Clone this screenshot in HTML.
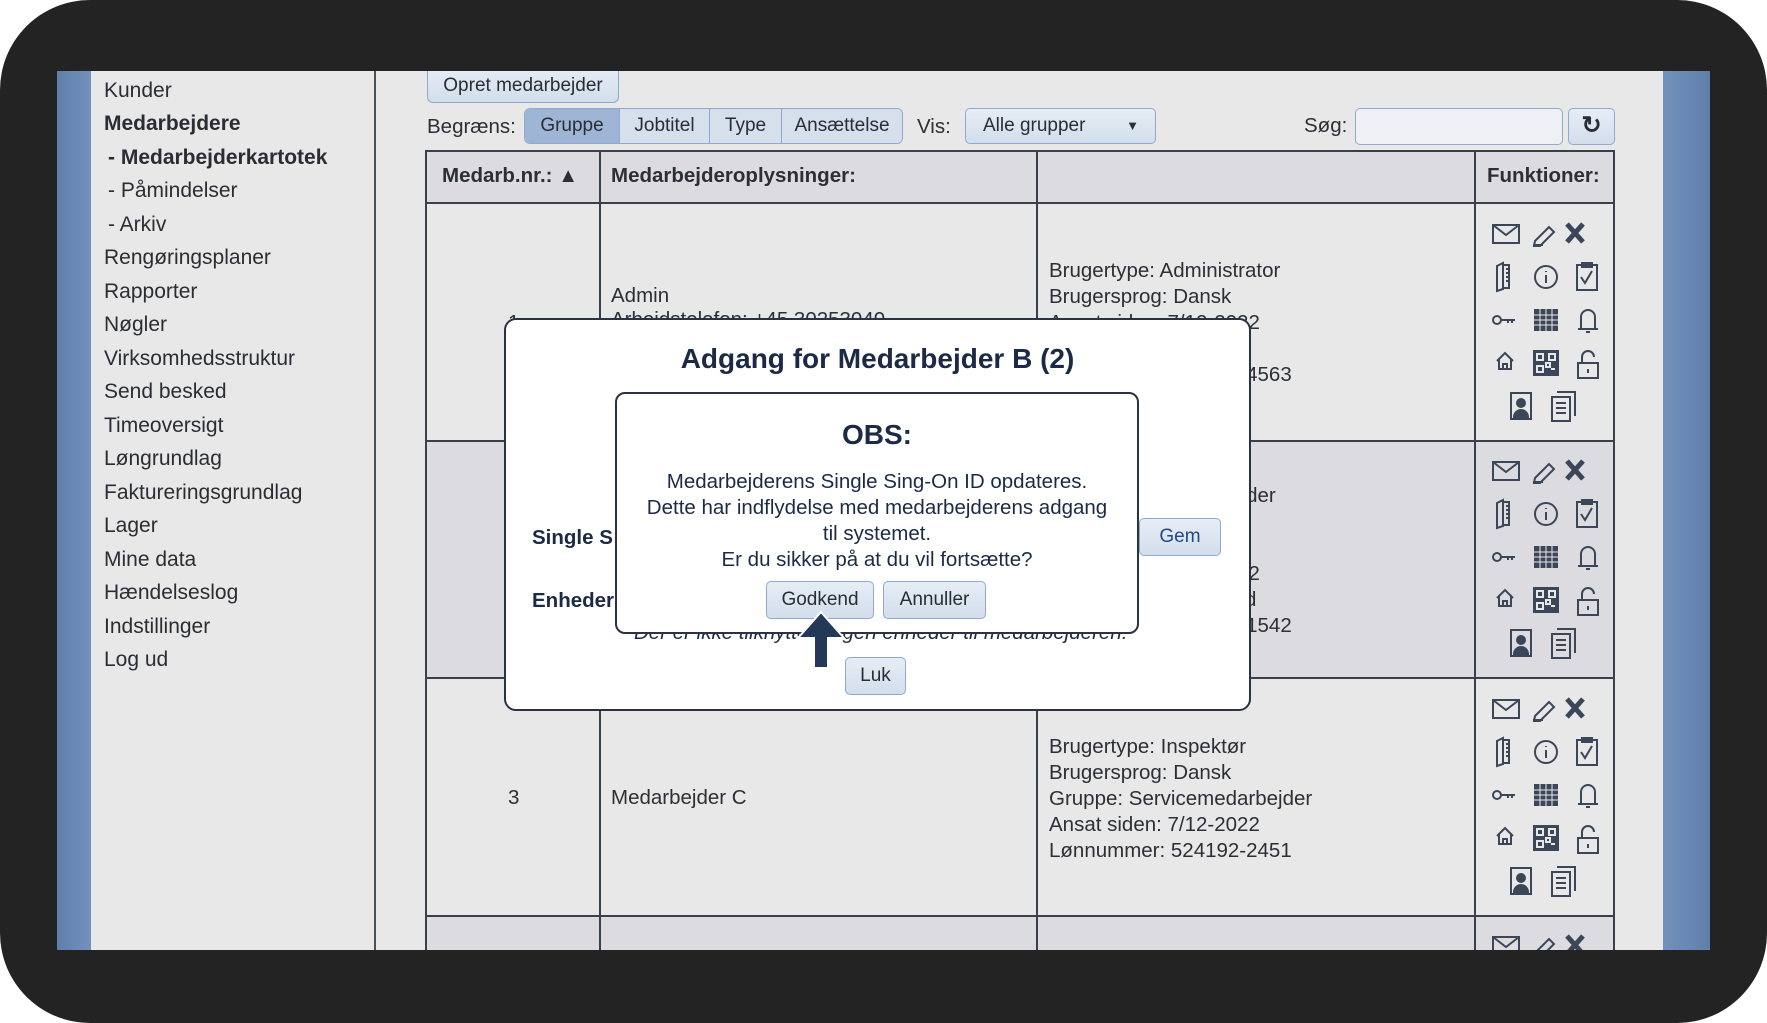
<!DOCTYPE html>
<html style="overflow:hidden"><head><meta charset="utf-8"><style>
*{margin:0;padding:0;box-sizing:border-box}
html,body{width:1767px;height:1023px;overflow:hidden}
body{background:#fff;position:relative;font-family:"Liberation Sans",sans-serif;color:#222;}
.frame{position:absolute;left:0;top:0;width:1767px;height:1023px;background:#232323;border-radius:90px}
.abs{position:absolute}
.screen{position:absolute;left:57px;top:71px;width:1653px;height:879px;background:#e8e8e8;overflow:hidden}
.menu div{position:absolute;left:47px;font-size:21px;color:#2a2d33;white-space:nowrap;line-height:24px}
.t{position:absolute;font-size:20.5px;white-space:nowrap;line-height:24px;color:#2c2f36}
.btn{position:absolute;background:linear-gradient(#e6edf6,#d3deec);border:1.5px solid #8fa9d0;border-radius:5px;font-size:19px;text-align:center;color:#2a2d33}
.hl{position:absolute;background:#3a3f4a}
</style></head><body>
<div class="frame"></div>
<div class="screen">
 <div class="abs" style="left:0;top:0;width:34px;height:879px;background:linear-gradient(90deg,#5f7fab,#7391bb)"></div>
 <div class="abs" style="left:1606px;top:0;width:47px;height:879px;background:linear-gradient(90deg,#7391bb,#5f7fab)"></div>
 <div class="abs" style="left:317px;top:0;width:2px;height:879px;background:#4a4f5a"></div>
 <div class="menu">
  <div style="top:8px">Kunder</div>
  <div style="top:41px;font-weight:bold">Medarbejdere</div>
  <div style="top:75px;left:51px;font-weight:bold">- Medarbejderkartotek</div>
  <div style="top:108px;left:51px">- Påmindelser</div>
  <div style="top:142px;left:51px">- Arkiv</div>
  <div style="top:175px">Rengøringsplaner</div>
  <div style="top:209px">Rapporter</div>
  <div style="top:242px">Nøgler</div>
  <div style="top:276px">Virksomhedsstruktur</div>
  <div style="top:309px">Send besked</div>
  <div style="top:343px">Timeoversigt</div>
  <div style="top:376px">Løngrundlag</div>
  <div style="top:410px">Faktureringsgrundlag</div>
  <div style="top:443px">Lager</div>
  <div style="top:477px">Mine data</div>
  <div style="top:510px">Hændelseslog</div>
  <div style="top:544px">Indstillinger</div>
  <div style="top:577px">Log ud</div>
 </div>
 <div class="btn" style="left:370px;top:-4px;width:192px;height:36px;line-height:38px;border-top:none;border-radius:0 0 6px 6px">Opret medarbejder</div>
 <div class="t" style="left:370px;top:44px">Begræns:</div>
 <div class="abs" style="left:467px;top:37px;width:379px;height:36px;border:1.5px solid #8fa9d0;border-radius:6px;overflow:hidden;display:flex;font-size:19px;line-height:34px;color:#2a2d33">
  <div style="width:94px;text-align:center;background:#9fb5d5">Gruppe</div>
  <div style="width:90px;text-align:center;background:#d6dfec;border-left:1.5px solid #8fa9d0">Jobtitel</div>
  <div style="width:72px;text-align:center;background:#d6dfec;border-left:1.5px solid #8fa9d0">Type</div>
  <div style="flex:1;text-align:center;background:#d6dfec;border-left:1.5px solid #8fa9d0">Ansættelse</div>
 </div>
 <div class="t" style="left:860px;top:44px">Vis:</div>
 <div class="btn" style="left:908px;top:37px;width:191px;height:36px;line-height:34px;text-align:left;padding-left:17px">Alle grupper<span style="position:absolute;right:16px;top:0;font-size:13px">▼</span></div>
 <div class="t" style="left:1247px;top:43px">Søg:</div>
 <div class="abs" style="left:1298px;top:37px;width:208px;height:37px;background:#eef0f4;border:1.5px solid #8fa9d0;border-radius:5px"></div>
 <div class="btn" style="left:1511px;top:37px;width:47px;height:37px;line-height:34px;font-size:24px;font-weight:bold">↻</div>
 <div class="abs" style="left:368px;top:79px;width:1190px;height:800px;background:#e8e8e8"></div>
 <div class="abs" style="left:368px;top:79px;width:1190px;height:53px;background:#dcdce0"></div>
 <div class="abs" style="left:368px;top:370px;width:1190px;height:237px;background:#dcdce0"></div>
 <div class="abs" style="left:368px;top:845px;width:1190px;height:40px;background:#dcdce0"></div>
 <div class="hl" style="left:368px;top:79px;width:1190px;height:2px"></div>
 <div class="hl" style="left:368px;top:131px;width:1190px;height:2px"></div>
 <div class="hl" style="left:368px;top:369px;width:1190px;height:2px"></div>
 <div class="hl" style="left:368px;top:606px;width:1190px;height:2px"></div>
 <div class="hl" style="left:368px;top:844px;width:1190px;height:2px"></div>
 <div class="hl" style="left:368px;top:79px;width:2px;height:800px"></div>
 <div class="hl" style="left:542px;top:79px;width:2px;height:800px"></div>
 <div class="hl" style="left:979px;top:79px;width:2px;height:800px"></div>
 <div class="hl" style="left:1417px;top:79px;width:2px;height:800px"></div>
 <div class="hl" style="left:1556px;top:79px;width:2px;height:800px"></div>
 <div class="t" style="left:385px;top:93px;font-weight:bold">Medarb.nr.: <span style="font-size:20px">▲</span></div>
 <div class="t" style="left:554px;top:93px;font-weight:bold">Medarbejderoplysninger:</div>
 <div class="t" style="left:1430px;top:93px;font-weight:bold">Funktioner:</div>
 <div class="t" style="left:451px;top:240px">1</div>
 <div class="t" style="left:554px;top:213px">Admin<br>Arbejdstelefon: +45 30253040</div>
 <div class="t" style="left:992px;top:187px;line-height:26px">Brugertype: Administrator<br>Brugersprog: Dansk<br>Ansat siden: 7/12-2022<br><br>Lønnummer: 524192-4563</div>
 <div class="t" style="left:992px;top:412px;line-height:26px">Brugertype: Medarbejder<br>Brugersprog: Dansk<br>Gruppe: Rengøringer<br>Ansat siden: 7/12-2022<br>Arbejdstid: Inkl. overtid<br>Lønnummer: 524192-1542</div>
 <div class="t" style="left:451px;top:715px">3</div>
 <div class="t" style="left:554px;top:715px">Medarbejder C</div>
 <div class="t" style="left:992px;top:663px;line-height:26px">Brugertype: Inspektør<br>Brugersprog: Dansk<br>Gruppe: Servicemedarbejder<br>Ansat siden: 7/12-2022<br>Lønnummer: 524192-2451</div>
 <svg class="abs" style="left:0;top:0" width="1653" height="879">
  <defs>
   <g id="ic" fill="none" stroke="#3b4659" stroke-width="2">
    <rect x="16" y="22" width="26" height="18"/><path d="M16 22l13 10 13-10"/>
    <path d="M58 38l14-14 5 5-14 14h-6zM56 42h10"/>
    <path d="M90 21l16 18M106 21l-16 18" stroke-width="5"/>
    <path d="M20 63l6-3v26l-6 2zM26 62h6v23h-6M29 66h2M29 70h2M29 74h2M29 78h2"/>
    <circle cx="69" cy="74" r="11"/><path d="M69 72v8M69 68v1"/>
    <rect x="100" y="62" width="20" height="25"/><rect x="105" y="60" width="10" height="4" fill="#3b4659"/><path d="M104 74l4 6 7-12"/>
    <circle cx="20" cy="117" r="4"/><path d="M24 117h14M31 117v3M35 117v3"/>
    <rect x="57" y="106" width="24" height="22" fill="#3b4659" stroke="none"/><path d="M57 112h24M57 117h24M57 122h24M63 106v22M69 106v22M75 106v22" stroke="#e8e8e8" stroke-width="1"/>
    <path d="M104 126v-12a7 7 0 0 1 14 0v12h3h-20zM109 129h4"/>
    <path d="M20 158l8-8 8 8M22 156v10h12v-10M26 166v-5h4v5"/>
    <rect x="56" y="147" width="26" height="26" fill="#3b4659" stroke="none"/><path d="M60 151h6v6h-6zM72 151h6v6h-6zM60 163h6v6h-6zM69 160h4v4h-4zM74 166h4" stroke="#e8e8e8" stroke-width="2"/>
    <rect x="101" y="160" width="20" height="15"/><path d="M105 160v-6a6 6 0 0 1 12 0M111 166v4"/>
    <rect x="34" y="190" width="20" height="26"/><circle cx="44" cy="200" r="4" fill="#3b4659"/><path d="M37 214a7 7 0 0 1 14 0z" fill="#3b4659"/>
    <rect x="75" y="194" width="18" height="24"/><path d="M80 189h18v24M79 200h10M79 205h10M79 210h10"/>
   </g>
  </defs>
  <use href="#ic" x="1420" y="132"/>
  <use href="#ic" x="1420" y="369"/>
  <use href="#ic" x="1420" y="607"/>
  <use href="#ic" x="1420" y="844"/>
 </svg>
</div>
<div class="abs" style="left:504px;top:318px;width:747px;height:393px;background:#fff;border:2px solid #2a3244;border-radius:12px"></div>
<div class="abs" style="left:504px;top:343px;width:747px;text-align:center;font-size:28px;font-weight:bold;color:#1c2a45">Adgang for Medarbejder B (2)</div>
<div class="t" style="left:532px;top:526px;font-weight:bold;color:#1c2a45">Single S</div>
<div class="t" style="left:532px;top:589px;font-weight:bold;color:#1c2a45">Enheder</div>
<div class="btn" style="left:1139px;top:518px;width:82px;height:38px;line-height:36px;color:#1f4a85">Gem</div>
<div class="t" style="left:634px;top:621px;font-style:italic;color:#1c2a45">Der er ikke tilknyttet nogen enheder til medarbejderen.</div>
<div class="btn" style="left:845px;top:657px;width:61px;height:38px;line-height:36px">Luk</div>
<div class="abs" style="left:615px;top:392px;width:524px;height:242px;background:#fff;border:2px solid #2a3244;border-radius:10px;text-align:center;color:#1c2a45">
 <div style="font-size:28px;font-weight:bold;margin-top:25px">OBS:</div>
 <div style="font-size:20.5px;line-height:26px;margin-top:18px">Medarbejderens Single Sing-On ID opdateres.<br>Dette har indflydelse med medarbejderens adgang<br>til systemet.<br>Er du sikker på at du vil fortsætte?</div>
</div>
<div class="btn" style="left:766px;top:581px;width:108px;height:38px;line-height:36px">Godkend</div>
<div class="btn" style="left:883px;top:581px;width:103px;height:38px;line-height:36px">Annuller</div>
<svg class="abs" style="left:796px;top:610px" width="50" height="60"><path d="M25 2L48 28H32V58H18V28H2Z" fill="#243858" stroke="#fff" stroke-width="2"/></svg>
</body></html>
